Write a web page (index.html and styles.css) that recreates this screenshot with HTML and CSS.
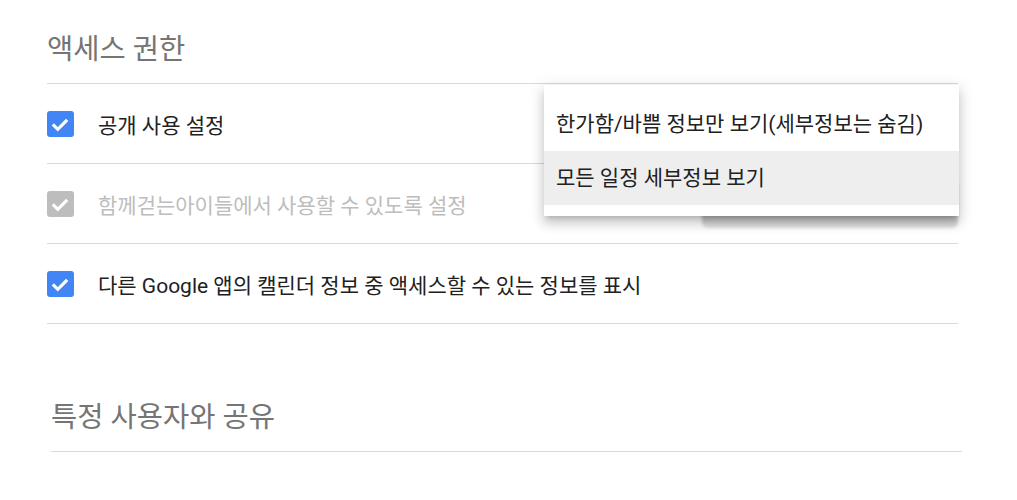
FILE: index.html
```html
<!DOCTYPE html>
<html lang="ko">
<head>
<meta charset="utf-8">
<link rel="stylesheet" href="styles.css">
</head>
<body>
<div class="page">
  <section class="section">
    <h2 class="section-title">액세스 권한</h2>
    <div class="row">
      <span class="checkbox"><svg viewBox="0 0 26 26" width="26" height="26"><path d="M5.8 13.4 L10.8 18.3 L20.2 8.9" fill="none" stroke="#fff" stroke-width="3.2"/></svg></span>
      <span class="label">공개 사용 설정</span>
    </div>
    <div class="row disabled">
      <span class="checkbox"><svg viewBox="0 0 26 26" width="26" height="26"><path d="M5.8 13.4 L10.8 18.3 L20.2 8.9" fill="none" stroke="#fff" stroke-width="3.2"/></svg></span>
      <span class="label">함께걷는아이들에서 사용할 수 있도록 설정</span>
    </div>
    <div class="row">
      <span class="checkbox"><svg viewBox="0 0 26 26" width="26" height="26"><path d="M5.8 13.4 L10.8 18.3 L20.2 8.9" fill="none" stroke="#fff" stroke-width="3.2"/></svg></span>
      <span class="label">다른 Google 앱의 캘린더 정보 중 액세스할 수 있는 정보를 표시</span>
    </div>
  </section>

  <section class="section section-share">
    <h2 class="section-title">특정 사용자와 공유</h2>
  </section>

  <div class="select-shadow"></div>
  <ul class="menu">
    <li class="menu-item">한가함/바쁨 정보만 보기(세부정보는 숨김)</li>
    <li class="menu-item active">모든 일정 세부정보 보기</li>
  </ul>
</div>
</body>
</html>
```

FILE: styles.css
```css
html, body {
  margin: 0;
  padding: 0;
  background: #fff;
}

body {
  font-family: Roboto, "Noto Sans CJK KR", sans-serif;
  color: #212121;
}

.page {
  position: relative;
  width: 1017px;
  height: 500px;
  overflow: hidden;
}

.section {
  margin-left: 47px;
  width: 911px;
}

.section-title {
  margin: 0;
  padding: 30px 0 13px 0;
  height: 40px;
  line-height: 40px;
  font-size: 28.5px;
  font-weight: 400;
  color: #757575;
  border-bottom: 1px solid #d9d9dc;
}

.row {
  display: flex;
  align-items: center;
  height: 79px;
  border-bottom: 1px solid #d9d9dc;
}

.checkbox {
  flex: none;
  width: 27px;
  height: 26px;
  border-radius: 3px;
  background: #4285f4;
  margin-right: 24px;
  display: flex;
}

.label {
  font-size: 21px;
  color: #212121;
}

.disabled .checkbox {
  background: #bdbdbd;
}

.disabled .label {
  color: #bdbdbd;
}

.section-share {
  margin-top: 44px;
  margin-left: 51px;
}

.select-shadow {
  position: absolute;
  left: 702px;
  top: 180px;
  width: 256px;
  height: 48px;
  border-radius: 6px;
  background: linear-gradient(#bdbdbf 0%, #bdbdbf 72%, #e6e6e8 100%);
  filter: blur(1.5px);
}

.menu {
  position: absolute;
  left: 544px;
  top: 85px;
  width: 415px;
  margin: 0;
  padding: 13px 0 11px 0;
  list-style: none;
  background: #fff;
  box-shadow: 0 8px 10px 1px rgba(0, 0, 0, 0.12), 0 3px 14px 2px rgba(0, 0, 0, 0.1), 0 5px 5px -3px rgba(0, 0, 0, 0.16);
}

.menu-item {
  height: 53px;
  line-height: 53px;
  padding: 0 12px;
  font-size: 21px;
  color: #212121;
}

.menu-item.active {
  background: #eeeeee;
  height: 54px;
  line-height: 54px;
}
```
